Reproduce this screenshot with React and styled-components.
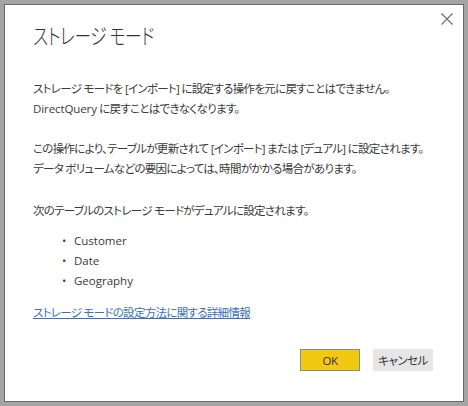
import React from "react";
import styled, { createGlobalStyle } from "styled-components";

const Global = createGlobalStyle`
  html, body { margin: 0; padding: 0; }
  body {
    background: #a4a4a4;
    font-family: "Open Sans", "Noto Sans CJK JP", sans-serif;
  }
`;

const Page = styled.div`
  width: 468px;
  height: 406px;
  box-sizing: border-box;
  padding: 4px;
`;

const Dialog = styled.div`
  position: relative;
  width: 460px;
  height: 398px;
  box-sizing: border-box;
  background: #fff;
  border: 1px solid #6a6a6a;
  padding: 12px 30px 30px 28px;
  display: flex;
  flex-direction: column;
  color: #3a3a3a;
  font-feature-settings: "palt";
`;

const Close = styled.button`
  position: absolute;
  top: 3px;
  right: 5px;
  width: 22px;
  height: 22px;
  padding: 0;
  border: none;
  background: transparent;
  display: flex;
  align-items: center;
  justify-content: center;
`;

const Title = styled.h1`
  margin: 0;
  font-family: "Noto Sans CJK JP", sans-serif;
  font-weight: 300;
  font-size: 22px;
  line-height: 34px;
  color: #333;
  letter-spacing: -0.5px;
  transform: scaleX(0.76);
  transform-origin: left center;
  white-space: nowrap;
`;

const Body = styled.div`
  margin-top: 28px;
  font-size: 11.5px;
  letter-spacing: -0.7px;
  line-height: 20px;
  white-space: nowrap;
`;

const Para = styled.p`
  margin: 0 0 ${(p) => p.$gap ?? 20}px 0;
`;

const Latin = styled.span`
  letter-spacing: -0.1px;
`;

const List = styled.ul`
  margin: -10px 0 12px 0;
  padding: 0 0 0 41px;
  list-style: none;
  letter-spacing: 0;
`;

const Item = styled.li`
  position: relative;
  &::before {
    content: "•";
    position: absolute;
    left: -12px;
  }
`;

const Link = styled.a`
  align-self: flex-start;
  color: #3a72c2;
  text-decoration: underline;
  cursor: pointer;
`;

const Footer = styled.div`
  margin-top: auto;
  display: flex;
  justify-content: flex-end;
  gap: 13px;
`;

const Button = styled.button`
  width: 60px;
  height: 22px;
  box-sizing: border-box;
  padding: 0;
  font-family: "Open Sans", "Noto Sans CJK JP", sans-serif;
  font-size: 11.5px;
  letter-spacing: -0.5px;
  color: #333;
  font-feature-settings: "palt";
  background: ${(p) => (p.$primary ? "#f2c811" : "#e6e6e6")};
  border: 1px solid ${(p) => (p.$primary ? "#8a8a8a" : "#e6e6e6")};
`;

export default function App() {
  return (
    <>
      <Global />
      <Page>
        <Dialog>
          <Close aria-label="閉じる">
            <svg width="12" height="12" viewBox="0 0 12 12">
              <path d="M0.5 0.5 L11.5 11.5 M11.5 0.5 L0.5 11.5" stroke="#6b6b6b" strokeWidth="1.1" fill="none" />
            </svg>
          </Close>
          <Title>ストレージ モード</Title>
          <Body>
            <Para>
              ストレージ モードを [インポート] に設定する操作を元に戻すことはできません。
              <br />
              <Latin>DirectQuery</Latin> に戻すことはできなくなります。
            </Para>
            <Para $gap={22}>
              この操作により、テーブルが更新されて [インポート] または [デュアル] に設定されます。
              <br />
              データ ボリュームなどの要因によっては、時間がかかる場合があります。
            </Para>
            <Para>次のテーブルのストレージ モードがデュアルに設定されます。</Para>
            <List>
              <Item>Customer</Item>
              <Item>Date</Item>
              <Item>Geography</Item>
            </List>
            <Link>ストレージ モードの設定方法に関する詳細情報</Link>
          </Body>
          <Footer>
            <Button $primary>OK</Button>
            <Button>キャンセル</Button>
          </Footer>
        </Dialog>
      </Page>
    </>
  );
}
